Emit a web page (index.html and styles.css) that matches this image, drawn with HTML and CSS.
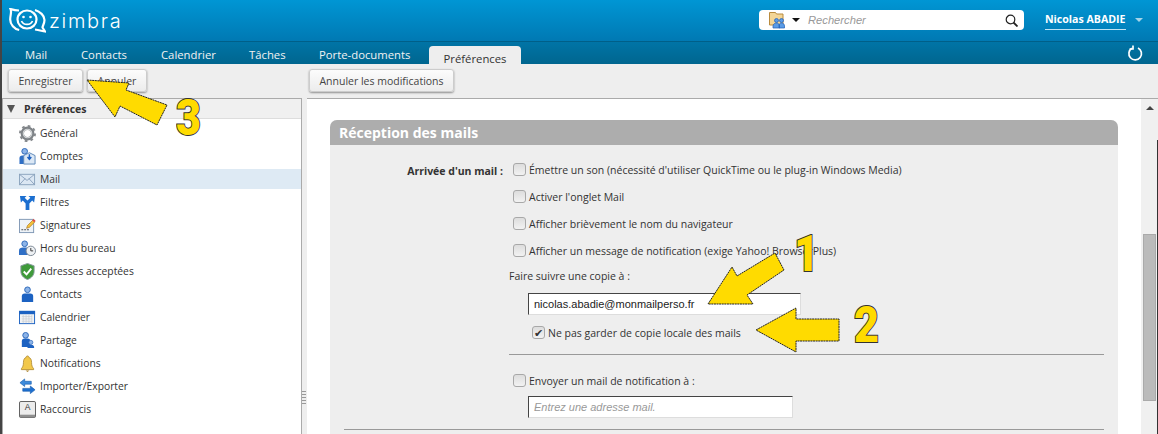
FILE: index.html
```html
<!DOCTYPE html>
<html lang="fr">
<head>
    <meta charset="UTF-8">
    <title>Zimbra - Préférences</title>
    <link rel="stylesheet" href="styles.css">
</head>
<body>
    <div class="app">
        <header class="topbar">
            <div class="logo">
                <svg width="37" height="25" viewBox="0 0 37 25" fill="none" stroke="#fff" stroke-width="2.200">
                    <path d="M10 2.500C6 2.500 1.500 1 1.500 1 3 4 1.200 7 1.200 11.500c0 5 4 9.500 9 10.500"/>
                    <path d="M26 2c5 1.500 9.500 5.500 9.500 10 0 3.500-2 6-2 7.500L36 23.500c-3-.5-6-1.500-10-2"/>
                    <ellipse cx="18" cy="11.500" rx="9.500" ry="9"/>
                    <circle cx="14.500" cy="9" r="1.300" fill="#fff" stroke="none"/>
                    <circle cx="21.500" cy="9" r="1.300" fill="#fff" stroke="none"/>
                    <path d="M12.500 13c2 4.500 9 4.500 11 0" stroke-width="1.700"/>
                </svg>
                <span class="logo-text">zimbra</span>
            </div>
            <div class="search">
                <svg class="search-type" width="16" height="18" viewBox="0 0 16 18">
                    <path d="M.5 1.500h6l1 1.500h6.500v11h-13.500z" fill="#f3d596" stroke="#b98b3e"/>
                    <circle cx="7.500" cy="9.500" r="2" fill="#5a9be6" stroke="#1f5fb8" stroke-width=".7"/>
                    <circle cx="12.500" cy="9.500" r="2" fill="#5a9be6" stroke="#1f5fb8" stroke-width=".7"/>
                    <path d="M4 17v-2c0-2 2-3 3.500-3s3 1 3 3v2zM10 17v-2c0-2 1-3 2.500-3s3 1 3 3v2z" fill="#5a9be6" stroke="#1f5fb8" stroke-width=".7"/>
                </svg>
                <span class="search-caret"></span>
                <span class="search-text">Rechercher</span>
                <svg class="search-icon" width="13" height="13" viewBox="0 0 13 13" fill="none" stroke="#222">
                    <circle cx="5.500" cy="5.500" r="4.300" stroke-width="1.200"/>
                    <path d="M8.500 8.500l4 4" stroke-width="1.800"/>
                </svg>
            </div>
            <div class="user">
                <span class="user-name">Nicolas ABADIE</span>
                <span class="user-caret"></span>
            </div>
        </header>

        <nav class="tabs">
            <a class="tab tab-mail">Mail</a>
            <a class="tab tab-contacts">Contacts</a>
            <a class="tab tab-cal">Calendrier</a>
            <a class="tab tab-tasks">Tâches</a>
            <a class="tab tab-docs">Porte-documents</a>
            <a class="tab tab-active">Préférences</a>
            <svg class="refresh" width="16" height="16" viewBox="0 0 16 16" fill="none" stroke="#fff" stroke-width="1.700">
                <path d="M5 3.200a6.300 6.300 0 1 0 6 -.2"/>
                <path d="M6 .5v3.500h-3.500"/>
            </svg>
        </nav>

        <div class="toolbar">
            <div class="toolbar-left">
                <button class="btn btn-save">Enregistrer</button>
                <button class="btn btn-cancel">Annuler</button>
            </div>
            <button class="btn btn-undo">Annuler les modifications</button>
        </div>

        <div class="main">
            <aside class="sidebar">
                <div class="sidebar-head"><span class="tri"></span>Préférences</div>
                <ul class="menu">
                    <li>
                        <svg viewBox="0 0 18 18"><circle cx="9" cy="9" r="5.500" fill="none" stroke="#7d8286" stroke-width="3.600"/><circle cx="9" cy="9" r="7.800" fill="none" stroke="#85898d" stroke-width="2.400" stroke-dasharray="2.800 3.330"/><circle cx="9" cy="9" r="4.500" fill="none" stroke="#d5d8da" stroke-width="1.200"/></svg>
                        Général
                    </li>
                    <li>
                        <svg viewBox="0 0 18 18"><circle cx="6" cy="3.500" r="3" fill="#8db4e8" stroke="#2b66b8"/><path d="M.5 17v-6c0-2 1-3 3-3h5v9z" fill="#2f6fc6"/><path d="M5 8l6-3 6 3v9h-12z" fill="#dce8f5" stroke="#5b86b8"/><path d="M11 6.500v5M9 9.500l2 2.500 2-2.500" fill="none" stroke="#1b5fc0" stroke-width="1.500"/></svg>
                        Comptes
                    </li>
                    <li class="selected">
                        <svg viewBox="0 0 18 18"><rect x=".5" y="3.500" width="16" height="11" fill="#dbe7f3" stroke="#8ba3bd"/><path d="M.5 3.500l8 6.500 8-6.500M.5 14.500l6-6.500M16.500 14.500l-6-6.500" fill="none" stroke="#8ba3bd"/></svg>
                        Mail
                    </li>
                    <li>
                        <svg viewBox="0 0 18 18"><path d="M7 17v-7L4 7 2 9 1 2h7L6 4l3 3 3-3-2-2h7l-1 7-2-2-3 3v7z" fill="#1c6fd0"/></svg>
                        Filtres
                    </li>
                    <li>
                        <svg viewBox="0 0 18 18"><rect x=".5" y="2.500" width="15" height="14" fill="#eef3f8" stroke="#7f97b4"/><path d="M2.500 13.500h9" stroke="#444" stroke-dasharray="2 1"/><path d="M8 12l1-3 6-6 2 2-6 6z" fill="#f4c23a" stroke="#a9772a" stroke-width=".7"/><path d="M14 3.500l1.500-1.500 2 2-1.500 1.500z" fill="#e24b4b"/></svg>
                        Signatures
                    </li>
                    <li>
                        <svg viewBox="0 0 18 18"><circle cx="6" cy="4" r="3" fill="#8db4e8" stroke="#2b66b8"/><path d="M0 16v-5c0-2 2-3 4-3h4c2 0 3 1 3 3v5z" fill="#2f6fc6"/><circle cx="12.500" cy="11.500" r="5" fill="#eef1f4" stroke="#7b8794"/><path d="M12.500 8.500v3h2.500" fill="none" stroke="#333"/></svg>
                        Hors du bureau
                    </li>
                    <li>
                        <svg viewBox="0 0 18 18"><path d="M9 .5l7 2.500v6c0 4-3 7-7 8.500-4-1.500-7-4.500-7-8.500v-6z" fill="#3f9a3a" stroke="#8a9aa0"/><path d="M5 9l3 3 5-6" fill="none" stroke="#fff" stroke-width="2"/></svg>
                        Adresses acceptées
                    </li>
                    <li>
                        <svg viewBox="0 0 18 18"><circle cx="9" cy="4" r="3" fill="#8db4e8" stroke="#2b66b8"/><path d="M3 17v-6c0-2 1-3 3-3h6c2 0 3 1 3 3v6z" fill="#1c62c2"/></svg>
                        Contacts
                    </li>
                    <li>
                        <svg viewBox="0 0 18 18"><rect x=".5" y="2.500" width="16" height="13" fill="#f1f3f5" stroke="#1c62c2"/><rect x="0" y="2" width="17" height="3.500" fill="#1c62c2"/><path d="M3 8h11M3 10.500h11M3 13h11M4.500 6v9M7.500 6v9M10.500 6v9M13.500 6v9" stroke="#c7ccd2" stroke-width=".7"/></svg>
                        Calendrier
                    </li>
                    <li>
                        <svg viewBox="0 0 18 18"><circle cx="7" cy="3.500" r="3" fill="#8db4e8" stroke="#2b66b8"/><path d="M3 16v-6c0-2 1-3 3-3h3c2 0 3 1 3 3v6z" fill="#1c62c2"/><circle cx="12.500" cy="11" r="2.200" fill="#8db4e8" stroke="#2b66b8" stroke-width=".7"/><path d="M9 17v-1c0-2 2-2.500 3.500-2.500s3.500.5 3.500 2.500v1z" fill="#1c62c2"/></svg>
                        Partage
                    </li>
                    <li>
                        <svg viewBox="0 0 18 18"><path d="M9 1c1 0 1.300.6 1.300 1.400 2.300.8 3 3 3 5.600 0 3.500 1 5 2.200 6.500v1h-13v-1c1.200-1.500 2.200-3 2.200-6.500 0-2.600.7-4.800 3-5.600 0-.8.300-1.400 1.300-1.400z" fill="#f2c84b" stroke="#a9822a" stroke-width=".8"/><path d="M7 16.500h4l-2 1.500z" fill="#a9822a"/></svg>
                        Notifications
                    </li>
                    <li>
                        <svg viewBox="0 0 18 18"><path d="M1 5l5-4v2.500h7v3h-7v2.500z" fill="#3d8bdc" stroke="#1b5fb0" stroke-width=".7"/><path d="M17 12.500l-5-4v2.500h-8v3h8v2.500z" fill="#1c6fd0" stroke="#1b5fb0" stroke-width=".7"/></svg>
                        Importer/Exporter
                    </li>
                    <li>
                        <svg viewBox="0 0 18 18"><rect x=".5" y=".5" width="17" height="17" rx="1.500" fill="#ececec" stroke="#555"/><rect x="1" y="14.500" width="16" height="3" fill="#8f8f8f"/><text x="9" y="10" font-size="9" text-anchor="middle" font-family="Liberation Sans" fill="#333">A</text></svg>
                        Raccourcis
                    </li>
                </ul>
                <div class="sash"></div>
            </aside>

            <section class="content">
                <div class="scroll-area">
                    <div class="card">
                        <h2 class="card-title">Réception des mails</h2>
                        <div class="form">
                            <div class="form-label">Arrivée d'un mail :</div>
                            <div class="form-fields">
                                <label class="check"><span class="box"></span>Émettre un son (nécessité d'utiliser QuickTime ou le plug-in Windows Media)</label>
                                <label class="check"><span class="box"></span>Activer l'onglet Mail</label>
                                <label class="check"><span class="box"></span>Afficher brièvement le nom du navigateur</label>
                                <label class="check"><span class="box"></span>Afficher un message de notification (exige Yahoo! BrowserPlus)</label>
                                <div class="copy-label">Faire suivre une copie à :</div>
                                <div class="input input-filled">nicolas.abadie@monmailperso.fr</div>
                                <label class="check check-sub"><span class="box box-on">✔</span>Ne pas garder de copie locale des mails</label>
                                <hr class="sep">
                                <label class="check check-notify"><span class="box"></span>Envoyer un mail de notification à :</label>
                                <div class="input input-empty">Entrez une adresse mail.</div>
                            </div>
                        </div>
                        <hr class="sep-long">
                    </div>
                </div>
                <div class="scrollbar">
                    <span class="scroll-up"></span>
                    <div class="scroll-thumb"></div>
                </div>
            </section>
        </div>

        <svg class="notes" width="1158" height="434" viewBox="0 0 1158 434">
            <g fill="#ffdb00" stroke="#222" stroke-width="1" stroke-dasharray="2 .6">
                <path d="M87 80L129 83 126 90 167 105 157 125 120 106 115 117z"/>
                <path d="M708 304L732 267 737 276 775 253 784 270 747 295 753 304z"/>
                <path d="M756 330L796 308V319H839V341H796V352z"/>
            </g>
        </svg>
        <span class="note note-1">1</span>
        <span class="note note-2">2</span>
        <span class="note note-3">3</span>
    </div>
</body>
</html>
```

FILE: styles.css
```css
* {
    box-sizing: border-box;
}

html, body {
    margin: 0;
    padding: 0;
    height: 100%;
    overflow: hidden;
}

body {
    font-family: 'Open Sans', 'Liberation Sans', sans-serif;
    font-size: 10.5px;
    color: #333;
}

.app {
    position: relative;
    width: 1158px;
    height: 434px;
    background-color: #eeeeee;
    border-left: 2px solid #444;
    overflow: hidden;
}

/* header */
.topbar {
    height: 41px;
    display: flex;
    align-items: flex-start;
    background: linear-gradient(#0096d4, #0079b3);
    color: white;
}

.logo {
    display: flex;
    align-items: flex-start;
    margin: 8px 0 0 7px;
    width: 750px;
}

.logo-text {
    margin-left: 3px;
    margin-top: 1px;
    font-family: 'Inter', sans-serif;
    font-size: 20px;
    line-height: 24px;
    font-weight: 300;
    letter-spacing: 1.700px;
}

.search {
    display: flex;
    align-items: center;
    width: 265px;
    height: 20px;
    margin-top: 10px;
    padding: 0 6px 0 10px;
    background-color: white;
    border-radius: 4px;
}

.search-caret {
    width: 0;
    height: 0;
    margin-left: 7px;
    border-left: 4px solid transparent;
    border-right: 4px solid transparent;
    border-top: 4px solid #111;
}

.search-text {
    flex: 1;
    margin-left: 8px;
    font-family: 'Liberation Sans', sans-serif;
    font-style: italic;
    font-size: 11.200px;
    color: #999;
}

.user {
    display: flex;
    margin: 12px 0 0 21px;
}

.user-name {
    height: 18px;
    padding: 0 0 2px 0;
    border-bottom: 1px solid #bfe3f3;
    font-weight: 700;
    font-size: 10.600px;
    line-height: 14px;
    white-space: nowrap;
}

.user-caret {
    width: 0;
    height: 0;
    margin: 6px 0 0 9px;
    border-left: 4px solid transparent;
    border-right: 4px solid transparent;
    border-top: 4px solid #a6d4e8;
}

/* tabs */
.tabs {
    position: relative;
    height: 23px;
    display: flex;
    align-items: flex-end;
    background: linear-gradient(#0074a6, #00668f);
    border-top: 1px solid #005f88;
}

.tab {
    height: 22px;
    padding-top: 5px;
    color: #f2f2f2;
    font-size: 11.300px;
    line-height: 15px;
    white-space: nowrap;
}

.tab-mail { margin-left: 23px; width: 56px; }
.tab-contacts { width: 80px; }
.tab-cal { width: 88px; }
.tab-tasks { width: 70px; }
.tab-docs { width: 110px; }

.tab-active {
    width: 92px;
    height: 18px;
    padding-top: 5px;
    text-align: center;
    color: #333;
    background-color: #eeeeee;
    border-radius: 4px 4px 0 0;
}

.refresh {
    position: absolute;
    right: 15px;
    top: 3px;
}

/* toolbar */
.toolbar {
    height: 34px;
    display: flex;
    padding-top: 5px;
    padding-left: 6px;
}

.toolbar-left {
    display: flex;
    gap: 4px;
    width: 301px;
}

.btn {
    height: 23px;
    padding: 0;
    border: 1px solid #ccc;
    border-radius: 3px;
    background: linear-gradient(#fcfcfc, #ececec);
    box-shadow: 0 1px 2px rgba(0, 0, 0, 0.4);
    color: #444;
    font-family: 'Open Sans', sans-serif;
    font-size: 10.500px;
    white-space: nowrap;
}

.btn-save { width: 75px; }
.btn-cancel { width: 60px; }
.btn-undo { width: 145px; }

/* main */
.main {
    height: 336px;
    display: flex;
}

.sidebar {
    position: relative;
    width: 300px;
    border: 1px solid #aaa;
    border-bottom: none;
    background-color: white;
}

.sidebar-head {
    height: 20px;
    display: flex;
    align-items: center;
    background-color: #f0f0f0;
    font-weight: 700;
    font-size: 10.500px;
    color: #333;
    border-bottom: 1px solid #ddd;
}

.tri {
    width: 0;
    height: 0;
    margin: 0 9px 0 4px;
    border-left: 4.500px solid transparent;
    border-right: 4.500px solid transparent;
    border-top: 8px solid #555;
}

.menu {
    list-style: none;
    display: flex;
    flex-direction: column;
    gap: 3px;
    margin: 4px 0 0 0;
    padding: 0;
}

.menu li {
    height: 20px;
    display: flex;
    align-items: center;
    gap: 4px;
    padding-left: 16px;
    font-size: 10.300px;
}

.menu li svg {
    width: 17px;
    height: 17px;
}

.menu li.selected {
    background-color: #deeaf4;
}

.sash {
    position: absolute;
    right: -5px;
    top: 292px;
    width: 4px;
    height: 14px;
    background: repeating-linear-gradient(#999 0, #999 1px, transparent 1px, transparent 3px);
}

.content {
    display: flex;
    flex: 1;
    margin-left: 5px;
    border-top: 1px solid #aaa;
    background-color: white;
}

.scroll-area {
    flex: 1;
    padding: 21px 0 0 23px;
    overflow: hidden;
}

.card {
    width: 788px;
    height: 320px;
    background-color: #eeeeee;
    border-radius: 7px 7px 0 0;
}

.card-title {
    height: 25px;
    margin: 0;
    padding-left: 9px;
    background-color: #adadad;
    border-radius: 7px 7px 0 0;
    color: white;
    font-size: 14px;
    line-height: 25px;
    font-weight: 700;
}

.form {
    display: flex;
    padding-top: 17px;
}

.form-label {
    width: 173px;
    padding-top: 2px;
    text-align: right;
    font-weight: 700;
    font-size: 10.500px;
}

.form-fields {
    flex: 1;
    padding-left: 10px;
}

.check {
    height: 27px;
    display: flex;
    align-items: flex-start;
    gap: 3px;
    padding-top: 1px;
    font-size: 10.500px;
    line-height: 14px;
}

.box {
    width: 13px;
    height: 13px;
    border: 1px solid #a8a8a8;
    border-radius: 3px;
    background: linear-gradient(#ddd, #f2f2f2);
    font-size: 11px;
    line-height: 11px;
    text-align: center;
    color: #333;
}

.copy-label {
    margin: -1px 0 0 -4px;
    height: 24px;
    line-height: 14px;
}

.input {
    height: 22px;
    border: 1px solid #ddd;
    border-top-color: #444;
    border-left-color: #444;
    background-color: white;
    padding-left: 5px;
    line-height: 20px;
    font-family: 'Liberation Sans', sans-serif;
}

.input-filled {
    width: 273px;
    margin-left: 15px;
    font-size: 11px;
    color: #222;
}

.check-sub {
    margin: 10px 0 0 19px;
    height: 20px;
}

.sep {
    width: 595px;
    margin: 9px 0 0 -4px;
    border: none;
    border-top: 1px solid #999;
}

.check-notify {
    margin-top: 18px;
    height: 23px;
}

.input-empty {
    width: 265px;
    margin-left: 15px;
    margin-bottom: 11px;
    font-size: 11px;
    font-style: italic;
    color: #999;
}

.sep-long {
    width: 760px;
    margin: 0 0 0 14px;
    border: none;
    border-top: 1px solid #999;
}

.scrollbar {
    position: relative;
    width: 17px;
    background-color: #f0f0f0;
}

.scrollbar::after {
    content: "";
    position: absolute;
    right: 0;
    top: 41px;
    bottom: 0;
    width: 1px;
    background-color: #333;
}

.scroll-up {
    position: absolute;
    top: 7px;
    left: 5px;
    width: 0;
    height: 0;
    border-left: 4px solid transparent;
    border-right: 4px solid transparent;
    border-bottom: 4px solid #444;
}

.scroll-thumb {
    position: absolute;
    top: 135px;
    left: 2px;
    width: 13px;
    height: 167px;
    background-color: #bbb;
    border: 1px solid #aaa;
}

/* yellow annotations drawn over the screenshot */
.notes {
    position: absolute;
    left: -2px;
    top: 0;
    pointer-events: none;
}

.note {
    position: absolute;
    font-family: 'Roboto', sans-serif;
    font-weight: 900;
    font-size: 50px;
    line-height: 50px;
    color: #ffdb00;
    -webkit-text-stroke: 2px #333;
    paint-order: stroke fill;
    transform: scaleX(.86);
    transform-origin: left top;
}

.note-1 { left: 792px; top: 229px; }
.note-2 { left: 852px; top: 300px; }
.note-3 { left: 174px; top: 93px; }
```
